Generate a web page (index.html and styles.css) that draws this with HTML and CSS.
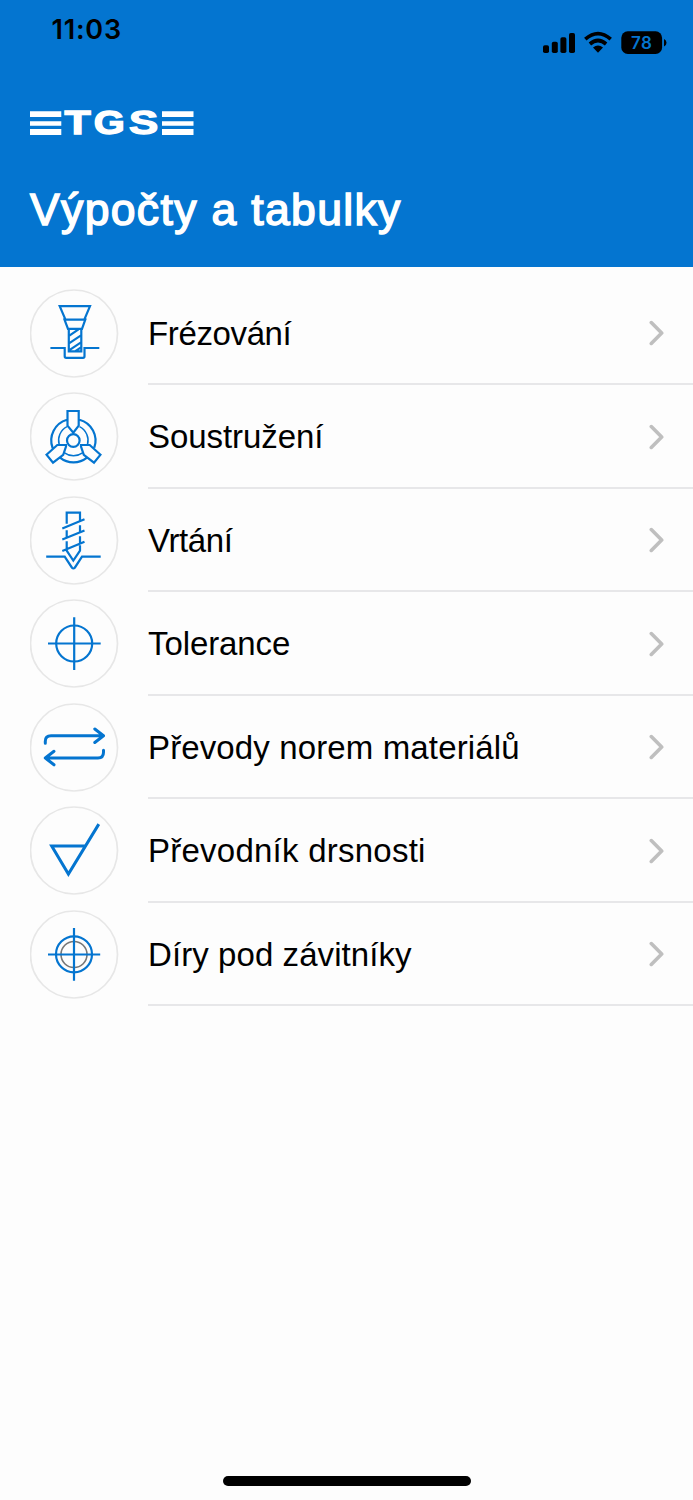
FILE: index.html
```html
<!DOCTYPE html>
<html lang="cs">
<head>
<meta charset="utf-8">
<title>Výpočty a tabulky</title>
<link rel="stylesheet" href="styles.css">
</head>
<body>
<div class="screen">
  <header class="header">
    <div class="status">
      <span class="time">11:03</span>
      <svg class="indicators" width="126" height="28" viewBox="541 28 126 28">
        <rect x="543" y="45.3" width="6" height="7.7" rx="1.8"/>
        <rect x="551.8" y="41.8" width="6" height="11.2" rx="1.8"/>
        <rect x="560.4" y="37.2" width="6" height="15.8" rx="1.8"/>
        <rect x="569" y="33" width="6" height="20" rx="1.8"/>
        <path class="wave" d="M585.3 39.2Q598 28.2 610.7 39.2M589.9 44Q598 37 606.1 44"/>
        <path d="M593 47.6Q598 43.6 603 47.6L598 52.8Z"/>
        <rect x="621.3" y="31.3" width="40.8" height="22.6" rx="6.5"/>
        <path d="M664 39Q666.5 40 666.5 42.7T664 46.5Z"/>
        <text class="charge" x="641.5" y="48.9" textLength="21">78</text>
      </svg>
    </div>
    <svg class="logo" width="164" height="26" viewBox="30 110 164 26">
      <path d="M30 111.2h31.3v5.9H30zM30 121.3h31.3v4.4H30zM30 129h31.3v6H30zM162 111.2h31.5v5.9H162zM162 121.3h31.5v4.4H162zM162 129h31.5v6H162z"/>
      <text transform="translate(64.4 134.3) scale(1.3 1)">T</text>
      <text transform="translate(93.7 134.3) scale(1.21 1)">G</text>
      <text transform="translate(128.9 134.3) scale(1.33 1)">S</text>
    </svg>
    <h1 class="title">Výpočty a tabulky</h1>
  </header>
  <main class="list">
    <a class="row">
      <svg class="icon" viewBox="10 8.7 89 89"><circle class="ring" cx="54" cy="53.2" r="43.5"/><path d="M39.7 25.8H70L64.3 39.3H45.5ZM44.5 39.3H65.3L62 48.5H48ZM48.8 48.5V71H61.3V48.5M49 55.5L58.5 49M49 63L61 55M49 70L61 62M55 71L61 67M30.4 67.7H44.7V76Q44.7 77.5 46.2 77.5H63Q64.5 77.5 64.5 76V67.7H79.3"/></svg>
      <span class="label"><span class="name milling">Frézování</span><svg class="chevron" viewBox="0 0 16 26"><path d="M2.3 2.6L12.7 13L2.3 23.4"/></svg></span>
    </a>
    <a class="row">
      <svg class="icon" viewBox="10 8.3 89 89"><circle class="ring" cx="54" cy="52.8" r="43.5"/><path d="M47.5 27.3H58.7V42L53.3 49L47.5 42ZM26.5 71L37.3 61.3H46V62.8L43.2 71.2L33 79ZM80.5 71L69.7 61.3H61V62.8L63.8 71.2L74 79ZM32.6 64.3A21.6 21.6 0 0 1 47 36M59.5 36A21.6 21.6 0 0 1 74.3 64M40 74A21.6 21.6 0 0 0 67 74"/><path class="thin" d="M39.2 61A15.4 15.4 0 0 1 47 43M59.5 43A15.4 15.4 0 0 1 67.5 61M44.5 69.2A15.4 15.4 0 0 0 62.5 69.2"/><circle cx="53.3" cy="56.8" r="6.3"/></svg>
      <span class="label"><span class="name turning">Soustružení</span><svg class="chevron" viewBox="0 0 16 26"><path d="M2.3 2.6L12.7 13L2.3 23.4"/></svg></span>
    </a>
    <a class="row">
      <svg class="icon" viewBox="10 8.8 89 89"><circle class="ring" cx="54" cy="53.3" r="43.5"/><path d="M46.7 36.5V25.5H60V34M42.3 41.3L64.5 32M46.7 43V50M60 38V45M42.3 52.3L64.5 43.3M46.7 54V61M60 49V57M42.3 63.7L64.5 54.5M46.7 62V63.5L53.3 73.3L60 63.5V58M26.2 69.5H44.7L52 80.5Q53.4 82 54.8 80.5L62 69.5H80.7"/></svg>
      <span class="label"><span class="name drilling">Vrtání</span><svg class="chevron" viewBox="0 0 16 26"><path d="M2.3 2.6L12.7 13L2.3 23.4"/></svg></span>
    </a>
    <a class="row">
      <svg class="icon" viewBox="10 9.3 89 89"><circle class="ring" cx="54" cy="53.8" r="43.5"/><circle cx="54.2" cy="53.8" r="18"/><path d="M54.2 27.6V80.3M28 53.8H80.7"/></svg>
      <span class="label"><span class="name tolerance">Tolerance</span><svg class="chevron" viewBox="0 0 16 26"><path d="M2.3 2.6L12.7 13L2.3 23.4"/></svg></span>
    </a>
    <a class="row">
      <svg class="icon" viewBox="10 8.7 89 89"><circle class="ring" cx="54" cy="53.2" r="43.5"/><path class="bold round" d="M25.3 49V47Q25.3 41.5 31 41.5H83M74.8 34.7L83.5 41.5L74.8 48.2M83.5 56V58Q83.5 63.7 78 63.7H25.5M34 57L25.3 63.7L34 70.5"/></svg>
      <span class="label"><span class="name materials">Převody norem materiálů</span><svg class="chevron" viewBox="0 0 16 26"><path d="M2.3 2.6L12.7 13L2.3 23.4"/></svg></span>
    </a>
    <a class="row">
      <svg class="icon" viewBox="10 8.2 89 89"><circle class="ring" cx="54" cy="52.7" r="43.5"/><path class="bold" d="M78.8 26.3L48.4 76.2L31.7 48.2H65.5"/></svg>
      <span class="label"><span class="name roughness">Převodník drsnosti</span><svg class="chevron" viewBox="0 0 16 26"><path d="M2.3 2.6L12.7 13L2.3 23.4"/></svg></span>
    </a>
    <a class="row">
      <svg class="icon" viewBox="10 9.5 89 89"><circle class="ring" cx="54" cy="54" r="43.5"/><circle class="bore" cx="54" cy="54" r="13"/><circle cx="54" cy="53.8" r="18"/><path d="M54 27.6V80.3M28 54H80.2"/></svg>
      <span class="label"><span class="name threads">Díry pod závitníky</span><svg class="chevron" viewBox="0 0 16 26"><path d="M2.3 2.6L12.7 13L2.3 23.4"/></svg></span>
    </a>
  </main>
  <div class="home"></div>
</div>
</body>
</html>
```
FILE: styles.css
```css
* { box-sizing: border-box; }
body { margin: 0; background: #fdfdfd; font-family: "Liberation Sans", Arial, sans-serif; color: #000; }
.screen { width: 693px; height: 1500px; display: flex; flex-direction: column; }
.header { height: 267px; background: #0475d0; padding: 0 26px 0 30px; display: flex; flex-direction: column; align-items: flex-start; }
.status { align-self: stretch; height: 110px; display: flex; justify-content: space-between; padding: 14px 0 0 21.5px; }
.time { font: 600 27px/32px Inter, sans-serif; letter-spacing: 0.8px; }
.indicators { margin-top: 14px; display: block; }
.wave { fill: none; stroke: #000; stroke-width: 3.7; }
.charge { font: 600 17px Inter, sans-serif; fill: #0475d0; text-anchor: middle; }
.logo { display: block; fill: #fff; font: 700 33px "Liberation Sans", Arial, sans-serif; overflow: visible; }
.logo text { stroke: #fff; stroke-width: 1.3; }
.title { margin: 48px 0 0; font-size: 44.5px; line-height: 52px; font-weight: 400; letter-spacing: 1.35px; color: #fff; -webkit-text-stroke: 1.5px #fff; white-space: nowrap; }
.list { flex: 1; padding: 14.5px 0 0 29.5px; }
.row { height: 103.5px; display: flex; align-items: stretch; gap: 29.5px; }
.icon { width: 89px; height: 89px; margin-top: 7.2px; flex: none; fill: none; stroke: #0475d0; stroke-width: 2.2; }
.ring { stroke: #e7e7e7; stroke-width: 1.7; }
.thin { stroke-width: 1.5; }
.bold { stroke-width: 3; }
.round { stroke-linecap: round; stroke-linejoin: round; }
.bore { stroke: #777; stroke-width: 1.6; }
.label { flex: 1; display: flex; align-items: center; justify-content: space-between; padding-right: 28.5px; border-bottom: 2px solid #e7e7e9; }
.name { font-size: 33px; line-height: 40px; padding-top: 3px; white-space: nowrap; }
.milling, .drilling { letter-spacing: -0.37px; }
.turning { letter-spacing: -0.06px; }
.tolerance { letter-spacing: -0.1px; }
.materials { letter-spacing: 0.13px; }
.roughness { letter-spacing: 0.24px; }
.threads { letter-spacing: 0.08px; }
.chevron { width: 16px; height: 26px; fill: none; stroke: #bfbfbf; stroke-width: 3.6; stroke-linecap: round; stroke-linejoin: round; margin-top: 2px; }
.home { width: 248px; height: 10px; border-radius: 5px; background: #000; margin: 0 auto 14px; }
```
